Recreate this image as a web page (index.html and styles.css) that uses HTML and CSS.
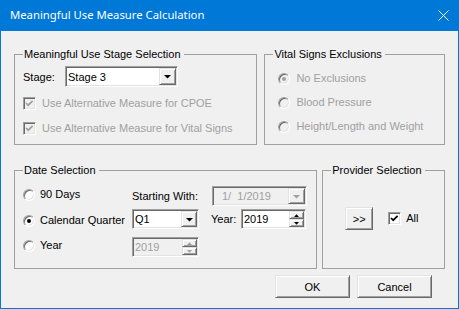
FILE: index.html
```html
<!DOCTYPE html>
<html>
<head>
<meta charset="utf-8">
<link rel="stylesheet" href="styles.css">
</head>
<body>
<div class="window">
  <div class="titlebar">
    <span class="title">Meaningful Use Measure Calculation</span>
    <svg class="close" width="11" height="11" viewBox="0 0 11 11"><path d="M0.5 0.5 L10.5 10.5 M10.5 0.5 L0.5 10.5" stroke="#fff" stroke-width="1" fill="none"/></svg>
  </div>
  <div class="client">
    <div class="row row-top">
      <fieldset class="group g-stage">
        <legend>Meaningful Use Stage Selection</legend>
        <div class="stage-row">
          <span class="stage-label">Stage:</span>
          <div class="combo combo-stage">
            <span class="combo-text">Stage 3</span>
            <span class="btn3d drop"><svg width="7" height="4" viewBox="0 0 7 4"><polygon points="0,0 7,0 3.5,3.6" fill="#000"/></svg></span>
          </div>
        </div>
        <div class="opt disabled cpoe">
          <span class="check dis"><svg width="11" height="11" viewBox="0 0 11 11"><path d="M2 5 L4.2 7.2 L8.6 2.8" stroke="#a0a0a0" stroke-width="1.7" fill="none"/></svg></span>
          <span>Use Alternative Measure for CPOE</span>
        </div>
        <div class="opt disabled vitals">
          <span class="check dis"><svg width="11" height="11" viewBox="0 0 11 11"><path d="M2 5 L4.2 7.2 L8.6 2.8" stroke="#a0a0a0" stroke-width="1.7" fill="none"/></svg></span>
          <span>Use Alternative Measure for Vital Signs</span>
        </div>
      </fieldset>
      <fieldset class="group g-vital">
        <legend>Vital Signs Exclusions</legend>
        <div class="vital-list">
          <div class="opt disabled"><span class="radio dis on"></span><span>No Exclusions</span></div>
          <div class="opt disabled"><span class="radio dis"></span><span>Blood Pressure</span></div>
          <div class="opt disabled"><span class="radio dis"></span><span>Height/Length and Weight</span></div>
        </div>
      </fieldset>
    </div>
    <div class="row row-bottom">
      <fieldset class="group g-date">
        <legend>Date Selection</legend>
        <div class="date-grid">
          <div class="opt r1"><span class="radio"></span><span>90 Days</span></div>
          <span class="lbl start-lbl">Starting With:</span>
          <div class="combo combo-date disabled-box">
            <span class="combo-text gray date-text">1/&nbsp; 1/2019</span>
            <span class="btn3d drop"><svg width="7" height="4" viewBox="0 0 7 4"><polygon points="0,0 7,0 3.5,3.6" fill="#a0a0a0"/></svg></span>
          </div>

          <div class="opt r2"><span class="radio on"></span><span>Calendar Quarter</span></div>
          <div class="combo combo-q">
            <span class="combo-text">Q1</span>
            <span class="btn3d drop"><svg width="7" height="4" viewBox="0 0 7 4"><polygon points="0,0 7,0 3.5,3.6" fill="#000"/></svg></span>
          </div>
          <span class="lbl year-lbl">Year:</span>
          <div class="combo spin-year">
            <span class="combo-text">2019</span>
            <span class="spin">
              <span class="btn3d sbtn"><svg width="5" height="3" viewBox="0 0 5 3"><polygon points="0,3 5,3 2.5,0.2" fill="#000"/></svg></span>
              <span class="btn3d sbtn"><svg width="5" height="3" viewBox="0 0 5 3"><polygon points="0,0 5,0 2.5,2.8" fill="#000"/></svg></span>
            </span>
          </div>

          <div class="opt r3"><span class="radio"></span><span>Year</span></div>
          <div class="combo spin-dis disabled-box">
            <span class="combo-text gray">2019</span>
            <span class="spin">
              <span class="btn3d sbtn"><svg width="5" height="3" viewBox="0 0 5 3"><polygon points="0,3 5,3 2.5,0.2" fill="#a0a0a0"/></svg></span>
              <span class="btn3d sbtn"><svg width="5" height="3" viewBox="0 0 5 3"><polygon points="0,0 5,0 2.5,2.8" fill="#a0a0a0"/></svg></span>
            </span>
          </div>
        </div>
      </fieldset>
      <fieldset class="group g-provider">
        <legend>Provider Selection</legend>
        <div class="prov-row">
          <button class="btn3d pbtn">&gt;&gt;</button>
          <div class="opt all">
            <span class="check"><svg width="11" height="11" viewBox="0 0 11 11"><path d="M2 5 L4.2 7.2 L8.6 2.8" stroke="#000" stroke-width="1.7" fill="none"/></svg></span>
            <span>All</span>
          </div>
        </div>
      </fieldset>
    </div>
    <div class="actions">
      <button class="btn3d dbtn">OK</button>
      <button class="btn3d dbtn">Cancel</button>
    </div>
  </div>
</div>
</body>
</html>
```

FILE: styles.css
```css
html, body {
  margin: 0;
  padding: 0;
  background: #f0f0f0;
  overflow: hidden;
}

.window {
  width: 459px;
  height: 309px;
  box-sizing: border-box;
  border: 1px solid #0078d7;
  border-top: none;
  background: #f0f0f0;
  font-family: "Liberation Sans", Arial, sans-serif;
  font-size: 11px;
  color: #000;
}

.titlebar {
  height: 31px;
  margin: 0 -1px;
  background: #0078d7;
  display: flex;
  align-items: center;
  justify-content: space-between;
  padding: 0 10px 0 10px;
}

.title {
  font-family: "Noto Sans", "Open Sans", sans-serif;
  font-size: 11.3px;
  color: #fff;
  line-height: 16px;
  margin-top: -1px;
}

.close {
  display: block;
  margin-top: -1px;
}

.client {
  padding: 17px 13px 0 13px;
}

.row {
  display: flex;
}

.row-top {
  gap: 7px;
}

.row-bottom {
  gap: 5px;
  margin-top: 19px;
}

.group {
  margin: 0;
  padding: 0;
  min-width: 0;
  box-sizing: border-box;
  border: 1px solid #a0a0a0;
}

.group legend {
  padding: 0 3px 0 1px;
  margin-left: 8px;
  line-height: 13px;
  height: 13px;
  font-size: 11px;
  white-space: nowrap;
}

.g-stage {
  width: 244px;
  height: 97px;
  padding-top: 5px;
}

.g-vital {
  width: 181px;
  height: 97px;
  padding-top: 11px;
}

.vital-list {
  display: flex;
  flex-direction: column;
  gap: 11px;
  padding-left: 13px;
}

.g-date {
  width: 304px;
  height: 105px;
  padding-top: 9px;
}

.g-provider {
  width: 123px;
  height: 105px;
  padding-top: 30px;
}

/* Stage group */
.stage-row {
  display: flex;
  align-items: center;
  height: 21px;
  padding-left: 8px;
}

.stage-label {
  width: 42px;
}

.opt {
  display: flex;
  align-items: center;
  height: 13px;
  line-height: 13px;
  gap: 6px;
  white-space: nowrap;
}

.opt.disabled {
  color: #a0a0a0;
}

.cpoe {
  margin: 10px 0 0 8px;
}

.vitals {
  margin: 12px 0 0 8px;
}

/* Checkboxes */
.check {
  width: 13px;
  height: 13px;
  box-sizing: border-box;
  border: 1px solid;
  border-color: #a0a0a0 #fff #fff #a0a0a0;
  box-shadow: inset 1px 1px #696969, inset -1px -1px #e3e3e3;
  background: #fff;
  flex: none;
  display: flex;
}

.check svg {
  display: block;
}

.check.dis {
  background: #f0f0f0;
}

/* Radios */
.radio {
  width: 12px;
  height: 12px;
  box-sizing: border-box;
  border-radius: 50%;
  border: 1px solid;
  border-color: #a0a0a0 #fff #fff #a0a0a0;
  box-shadow: inset 1px 1px #696969, inset -1px -1px #e3e3e3;
  background: #fff;
  flex: none;
  display: flex;
  align-items: center;
  justify-content: center;
}

.radio.dis {
  background: #f0f0f0;
}

.radio.on::after {
  content: "";
  width: 4px;
  height: 4px;
  border-radius: 50%;
  background: #000;
}

.radio.dis.on::after {
  background: #a0a0a0;
}

/* Combo / edit boxes */
.combo {
  height: 20px;
  box-sizing: border-box;
  border: 1px solid;
  border-color: #a0a0a0 #fff #fff #a0a0a0;
  box-shadow: inset 1px 1px #696969, inset -1px -1px #e3e3e3;
  background: #fff;
  padding: 1px;
  display: flex;
  align-items: center;
}

.combo.disabled-box {
  background: #f0f0f0;
}

.combo-text {
  flex: 1;
  padding-left: 1px;
  white-space: nowrap;
  line-height: 16px;
}

.combo-text.gray {
  color: #a0a0a0;
}

.combo-stage {
  width: 113px;
  height: 21px;
}

.btn3d {
  box-sizing: border-box;
  background: #f0f0f0;
  border: 1px solid;
  border-color: #e3e3e3 #696969 #696969 #e3e3e3;
  box-shadow: inset 1px 1px #fff, inset -1px -1px #a0a0a0;
}

.drop {
  width: 17px;
  align-self: stretch;
  display: flex;
  align-items: center;
  justify-content: center;
  flex: none;
}

.drop svg {
  display: block;
  margin-top: 1px;
}

/* Date grid */
.date-grid {
  display: grid;
  grid-template-columns: 110px 79px 30px 65px;
  grid-template-rows: 20px 20px 20px;
  row-gap: 3px;
  align-items: center;
  padding-left: 7px;
}

.date-grid .opt {
  gap: 5px;
  padding-left: 1px;
}

.date-grid .r1 {
  align-self: start;
  margin-top: 2px;
}

.date-grid .r2 {
  align-self: start;
  margin-top: 5px;
}

.date-grid .r3 {
  align-self: start;
  margin-top: 7px;
}

.combo-date {
  grid-column: 3 / 5;
  width: 95px;
  margin-left: 1px;
}

.date-text {
  padding-left: 8px;
}

.combo-q {
  width: 67px;
}

.combo-q .drop {
  width: 16px;
}

.lbl {
  white-space: nowrap;
}

.spin-year {
  width: 65px;
}

.spin-dis {
  width: 67px;
  margin-top: 5px;
}

.date-grid .spin-dis {
  align-self: start;
}

.spin {
  display: flex;
  flex-direction: column;
  align-self: stretch;
  width: 15px;
  flex: none;
}

.sbtn {
  flex: 1;
  display: flex;
  align-items: center;
  justify-content: center;
}

.sbtn svg {
  display: block;
}

/* Provider */
.prov-row {
  display: flex;
  align-items: center;
  padding-left: 22px;
}

.pbtn {
  width: 28px;
  height: 23px;
  padding: 0;
  font-family: "Liberation Sans", Arial, sans-serif;
  font-size: 11px;
  color: #000;
}

.all {
  margin-left: 15px;
  gap: 5px;
}

/* Dialog buttons */
.actions {
  display: flex;
  justify-content: flex-end;
  gap: 7px;
  margin: 6px 13px 0 0;
}

.dbtn {
  width: 75px;
  height: 23px;
  padding: 0;
  font-family: "Liberation Sans", Arial, sans-serif;
  font-size: 11px;
  color: #000;
}
```
